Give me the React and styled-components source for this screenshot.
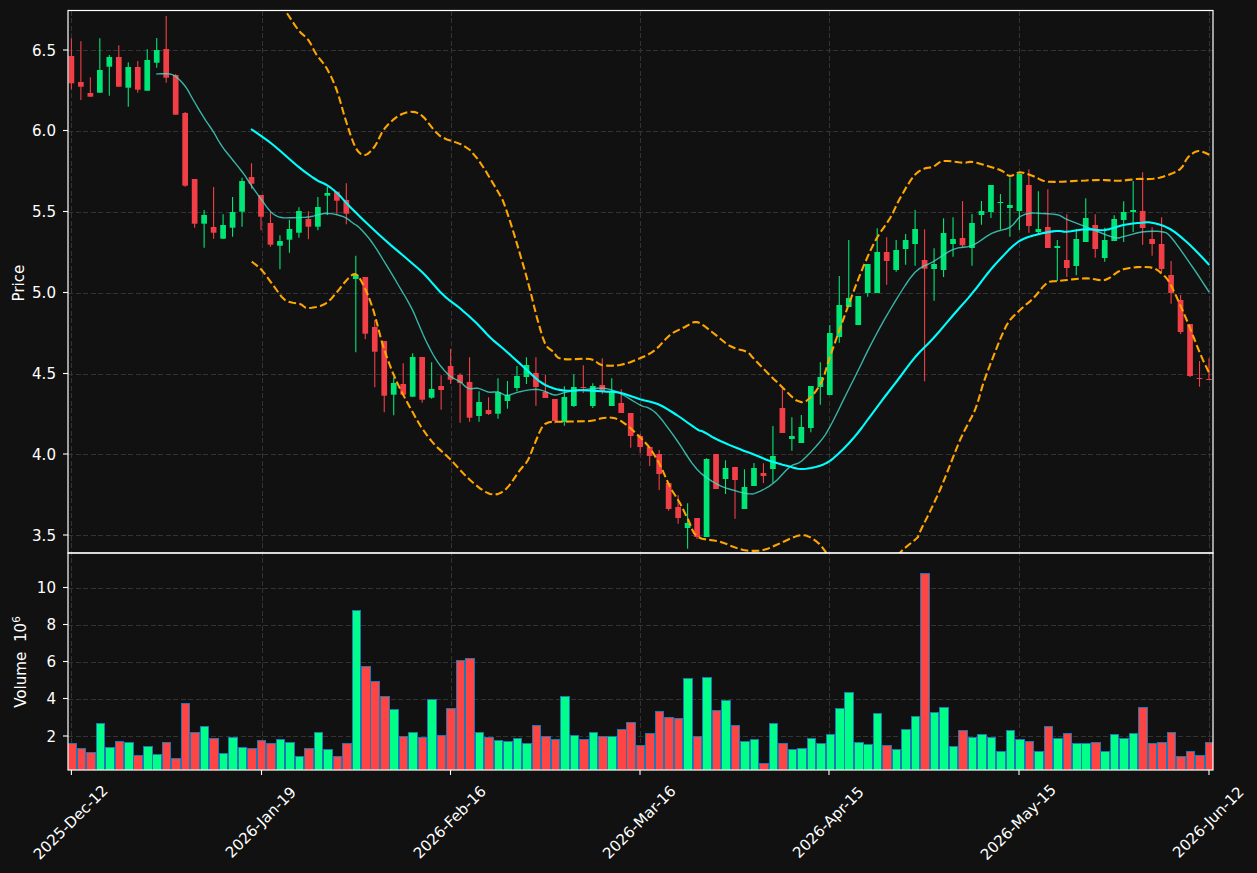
import React from 'react';
import styled, { createGlobalStyle } from 'styled-components';

const Global = createGlobalStyle`
  html, body { margin: 0; padding: 0; background: #111111; }
`;

const Page = styled.main`
  width: 1257px;
  height: 873px;
  background: #111111;
  overflow: hidden;
`;
const Figure = styled.svg`
  display: block;
  width: 1257px;
  height: 873px;
  font-family: 'DejaVu Sans', sans-serif;
`;
const GridLine = styled.line`
  stroke: #333333;
  stroke-width: 1;
  stroke-dasharray: 5 2.5;
  shape-rendering: crispEdges;
`;
const Spine = styled.rect`
  fill: none;
  stroke: #ffffff;
  stroke-width: 1.2;
`;
const Tick = styled.line`
  stroke: #ffffff;
  stroke-width: 1.1;
`;
const TickLabel = styled.text`
  fill: #ffffff;
  font-size: 15.1px;
  text-anchor: ${p => p.$anchor || 'end'};
`;
const AxisTitle = styled.text`
  fill: #ffffff;
  font-size: 15.1px;
  text-anchor: middle;
`;
const Wick = styled.line`
  stroke: ${p => (p.$up ? '#00e676' : '#f23f47')};
  stroke-width: 1.1;
`;
const Body = styled.rect`
  fill: ${p => (p.$up ? '#00e676' : '#f23f47')};
`;
const VolumeBar = styled.rect`
  fill: ${p => (p.$up ? '#00ff88' : '#ff4444')};
  stroke: #1f77b4;
  stroke-width: 1;
  shape-rendering: crispEdges;
`;
const Trace = styled.polyline`
  fill: none;
  stroke-linejoin: round;
  stroke: ${p => p.$color};
  stroke-width: ${p => p.$width};
  stroke-opacity: ${p => p.$opacity || 1};
  stroke-dasharray: ${p => p.$dash || 'none'};
`;

const X0 = 71.4;
const STEP = 9.48;
const xAt = i => X0 + STEP * i;

const candles = [
  [56,83.3,38.3,89.3,0],[82,86.7,41.3,100,0],[93,96.7,77.3,96.7,0],[70,92.7,38.3,92.7,1],[57,66.7,55,95.7,1],
  [57,86.7,45.3,86.7,0],[67,87.7,62.3,106.7,1],[67,89.7,61,92.7,0],[60,90.7,49.3,90.7,1],[50,62.7,38,67.7,1],
  [49,77.7,16,82.7,0],[75,114.7,74,114.7,0],[113,185.7,112,186.7,0],[179,223.7,179,227.7,0],[215,223.7,210,247.7,1],
  [227,232.7,187,238.7,0],[225,238.7,214.3,238.7,1],[212,227.7,197,236.7,1],[181,211.7,177.7,226.7,1],[177,183.7,163.3,188.7,0],
  [195,216.7,195,230.3,0],[223,244.7,212,246.7,0],[241,245.7,235.3,269.3,1],[229,239.7,219.7,252.7,1],[211,232.7,207.3,237.7,1],
  [219,226.7,211.3,239.3,0],[207,226.7,197,230.3,1],[193,195.7,186.7,215,1],[191.7,200.7,191.7,215,0],[200,213.7,183.3,224.3,0],
  [275,279,255.7,352.3,1],[277,333.7,277,339.3,0],[327,351.7,320,387.3,0],[341,395.7,341,412.3,0],[383,394.7,377.3,415.3,1],
  [384,394.7,363.3,394.7,0],[357,396.7,353.3,396.7,1],[357,399.7,357,402.7,0],[389,397.7,362.3,398.7,1],[386,390,375.3,409.7,0],
  [366,379.7,349,384,0],[375,383,373.3,422.7,0],[382,417.7,357.3,421.7,0],[402,416,391.3,421.7,1],[410,414,397.3,415,0],
  [392.3,413.7,378.3,418.7,1],[395,401,381,408.7,1],[376,388,366,391.3,1],[365,377,357.3,384,1],[373,387,357.3,405.7,0],
  [392,398,375,398,0],[399,421,399,423.3,0],[397,422,386.3,425.7,1],[387,406,374.3,407,1],[387,388,365.3,393,0],
  [386,406,383.3,408,1],[385,391,358.3,394,0],[391,406,378.3,406,1],[403,413,389.3,413,0],[413,436,413,447.7,0],
  [436,447,434,453,0],[447,456,447,466,0],[454,474,450,490,0],[483,509,483,510.7,0],[507,518,495.3,523.7,0],
  [523,528,503.3,548.7,1],[518,537,518,539,0],[459,537,458.3,537,1],[454,489,454,489,0],[468,479,460.3,494,1],
  [467,480,467,518.7,0],[487,509,469.3,509,1],[468,486,463,486,1],[473,476,463.3,483,0],[456,469,426,483,1],
  [408,433,387,433,0],[436,439,417.3,450.7,1],[427,443,415,443,1],[386,428,386,432.3,1],[377,387,362.3,404.7,1],
  [333,395,325,395,1],[305,337,276,342.7,1],[298,307,240,307,1],[296,325,296,325,1],[264,293,264,296.7,1],
  [252,293,228.3,293,1],[252,261,237.3,284.7,0],[250,270,240,271.7,1],[240,249,234,264.7,1],[229,244,210,265.7,1],
  [260,268.7,229.3,381.3,0],[264,269,248.3,300.7,1],[233,270,218.3,277,1],[239,244,217.3,256.7,1],[238,245.3,201,247.3,0],
  [223,248,214,265.7,1],[211,215,201,224.7,1],[185,212,185,218,1],[202,203,194,229.7,1],[205,208,177.3,236.7,1],
  [174,211,173.3,230,1],[185,226,169.3,232.7,0],[229,232,191.3,234,1],[227,248,189.3,248,0],[246,248,240,281,1],
  [260,268,214.3,277,0],[239,266,229,275.3,1],[218,242,198.3,242,1],[225,249,214.3,257.7,0],[240,258,227.7,261.7,1],
  [219,241,215.3,241,1],[212,220,201.3,242,1],[210,212,181,232,1],[211,228,172.3,244.7,0],[239,244,227.3,255.7,0],
  [244,269,217.3,272,0],[275,293,261,303.7,0],[300,332,295,334,0],[324,376,324,377,0],[378,379,361,386.7,0],
  [379,380,358.3,380,0],
];

const volumeTops = [
  743.3,748.3,752.3,723.3,747.3,741.3,742.3,755.3,746.3,754.3,742.3,758.3,703.3,732.3,726.3,738.3,753.3,737.3,747.3,748.3,
  740.3,743.3,739.3,742.3,756.3,748.3,732.3,749.3,756.3,743.3,610.3,666.3,681.3,696.3,709.3,736.3,732.3,737.3,699.3,735.3,
  708.3,660.3,658.3,732.3,737.3,740.3,741.3,738.3,743.3,725.3,736.3,739.3,696.3,735.3,739.3,732.3,736.3,736.3,729.3,722.3,
  745.3,733.3,711.3,717.3,718.3,678.3,736.3,677.3,710.3,700.3,725.3,741.3,739.3,763.3,723.3,743.3,749.3,748.3,738.3,743.3,
  734.3,708.3,692.3,742.3,744.3,713.3,745.3,749.3,729.3,716.3,573.3,712.3,707.3,746.3,730.3,737.3,734.3,737.3,751.3,730.3,
  739.3,741.3,751.3,726.3,738.3,733.3,743.3,743.3,742.3,751.3,734.3,738.3,733.3,707.3,743.3,742.3,732.3,756.3,751.3,755.3,
  742.3,
];

// Catmull-Rom resampling keeps the traced averages smooth between the read points.
const smooth = a => {
  const out = [];
  for (let i = 0; i < a.length - 1; i++) {
    const p0 = a[Math.max(i - 1, 0)];
    const p1 = a[i];
    const p2 = a[i + 1];
    const p3 = a[Math.min(i + 2, a.length - 1)];
    for (let k = 0; k < 4; k++) {
      const t = k / 4;
      const at = d =>
        0.5 * (2 * p1[d] + (p2[d] - p0[d]) * t + (2 * p0[d] - 5 * p1[d] + 4 * p2[d] - p3[d]) * t * t +
          (3 * p1[d] - p0[d] - 3 * p2[d] + p3[d]) * t * t * t);
      out.push(`${at(0).toFixed(1)},${at(1).toFixed(1)}`);
    }
  }
  const last = a[a.length - 1];
  out.push(`${last[0]},${last[1]}`);
  return out.join(' ');
};

const thinAverage = [
  [156.3,74],[166.7,73.7],[175,76],[185,86],[193.3,100],[203.3,116.7],[213.3,131.7],[222.3,146.7],[233.3,160.7],[243.3,173.3],
  [251.7,186],[261.7,200],[270.7,211.7],[280,217.3],[293.3,217.7],[310,216.7],[326.7,213.3],[343.3,216.7],[353.3,223.3],[360,228.3],
  [371,241],[383.3,260],[398.3,285],[411.7,308.3],[423.3,335],[433.3,355],[441.7,367.3],[450,376],[460,381.7],[468.3,388.3],
  [478.3,388.3],[488.3,392],[498.3,392],[506.7,395.3],[520,391.7],[535,389.3],[545,391.3],[555,395],[566.7,392],[583.3,389.7],
  [603.3,388.3],[620,393.3],[640,405],[649.3,408.3],[659.3,416.7],[676.7,440],[696.7,469],[716.7,484],[735,490.7],[748.3,493.7],
  [756.7,492.7],[773.3,483.3],[790,466.7],[801.7,461],[820,441.7],[830,426.7],[846.7,393.3],[856.7,373.3],[875,336.7],[895,301.7],
  [915,272.3],[933.3,261.7],[953.3,249.3],[972.7,245.3],[991.7,233.3],[1010,227.3],[1020,216.7],[1030,213.3],[1038.3,213.3],[1057.3,214.7],
  [1066.7,219.3],[1085.7,226.7],[1113.3,237.3],[1123.3,236.7],[1141.7,232],[1161.7,231.7],[1171,237.3],[1190,263.3],[1209.3,292.3],
];

const thickAverage = [
  [251,129],[273.3,145],[298.3,166.7],[316.7,180],[326.7,185],[336.7,192.7],[346.7,203.3],[360,216.7],[385,240],[408.3,260],
  [423.3,273.3],[440,291.7],[448.3,299.3],[460,308.3],[476.7,323.3],[490,337.3],[506.7,351.7],[523.3,366.7],[540,381.7],[553.3,388.3],
  [566.7,390.7],[583.3,390.3],[606.7,391.7],[620,392.7],[640,399.3],[658.3,404.3],[676.7,415],[696.7,429],[703.3,431.7],[716.7,439.3],
  [735,447.3],[753.3,454.3],[770,461],[786.7,465.7],[801.7,469],[820,465.7],[833.3,458.3],[853.3,438.3],[870,416.7],[885,396.5],
  [897,381],[915,357.3],[933.3,338.3],[953.3,315],[972.7,292.7],[988,273],[1000,259.3],[1018.3,241.7],[1038.3,234.3],[1056.7,231],
  [1066.7,231.7],[1085.7,229.3],[1105,230],[1123.3,225],[1141.7,222.7],[1151.7,222.7],[1170,229],[1190,245],[1209.3,265],
];

const upperBand = [
  [281,4],[285,10],[298.3,30],[308.3,40],[316.7,55],[326.7,68.3],[336.7,90],[346.7,123.3],[356,148.3],[365,155],
  [375,146],[385,128],[402,114],[420,114],[440,136],[470,150],[497,190],[507,212],[521.7,260],[530,290],
  [536.7,316.7],[545,343.3],[553.3,351.7],[561.7,359],[590,359],[601.7,365],[620,365],[640,358.3],[655,350],[670,335],
  [685,327],[697,322],[712,332],[730,346],[747,352],[755,360],[780,385],[801.7,402.3],[820,385],[830,356.7],
  [846.7,310],[863.3,266.7],[876.7,238.3],[890,218.3],[900,198.3],[913.3,176.7],[923.3,169],[933.3,166.7],[943.3,161],[963.3,162.7],
  [973.3,162],[991.7,167.3],[1001.7,170.7],[1010,176],[1020,172.3],[1033,176],[1048,181.7],[1080,180.7],[1100,180],[1120,180.7],
  [1136.7,179],[1150,179],[1163,176.7],[1180,169.3],[1188,157.3],[1198.3,151],[1209.3,154.7],
];

const lowerBand = [
  [251.7,261.7],[261.7,270],[273,285],[285,300],[300,304],[308,308],[325,304],[337,292],[345,282],[355,274],
  [363.3,285],[373.3,310],[383.3,346.7],[396.7,381.7],[413.3,413.3],[423.3,430],[435,445],[450,459],[470,480],[490,494],
  [505,490],[520,470],[528,460],[535,443],[545,424],[563.3,421.7],[590,421],[603.3,418],[615,418.3],[626.7,425],
  [640,437.3],[650,448.3],[660,465],[670,486.7],[680,503.3],[688.3,520],[697.3,536.7],[720,541.7],[743.3,550],[763.3,550],
  [780,543.3],[801.7,535],[816.7,541.7],[826.7,553.3],[838,570],[890,570],[900,552.7],[916.7,538.3],[920,531.7],[940,490],
  [960,440],[975,410],[983.3,383.3],[993.3,356.7],[1006.7,325],[1020,310],[1033.3,298.3],[1046.7,283.3],[1058.3,281],[1086.7,278.3],
  [1105,280],[1123.3,269.3],[1150,267.3],[1163.3,275],[1171.7,286.7],[1186.7,320],[1200,353.3],[1209.3,373.3],
];

const dateTicks = [
  [71.4, '2025-Dec-12'],
  [261.5, '2026-Jan-19'],
  [450.5, '2026-Feb-16'],
  [640, '2026-Mar-16'],
  [829, '2026-Apr-15'],
  [1019, '2026-May-15'],
  [1209, '2026-Jun-12'],
];
const priceTicks = [[50, '6.5'], [130.5, '6.0'], [211.5, '5.5'], [292.5, '5.0'], [373.5, '4.5'], [454, '4.0'], [535, '3.5']];
const volumeTicks = [[587.5, '10'], [624.5, '8'], [661.5, '6'], [698.5, '4'], [736, '2']];

const LEFT = 68;
const RIGHT = 1213;
const TOP = 10.5;
const MID = 553;
const BOTTOM = 770;

function YAxis({ ticks }) {
  return ticks.map(([y, label]) => (
    <g key={label}>
      <GridLine x1={LEFT} x2={RIGHT} y1={Math.round(y) + 0.5} y2={Math.round(y) + 0.5} />
      <Tick x1={LEFT - 5} x2={LEFT} y1={y} y2={y} />
      <TickLabel x={56} y={y + 5.5}>{label}</TickLabel>
    </g>
  ));
}

function Candle({ index, data }) {
  const [top, bottom, high, low, up] = data;
  const x = xAt(index);
  return (
    <g>
      <Wick $up={up} x1={x} x2={x} y1={high} y2={low} />
      <Body $up={up} x={x - 2.85} width={5.7} y={top} height={Math.max(bottom - top, 1)} />
    </g>
  );
}

export default function App() {
  return (
    <Page>
      <Global />
      <Figure viewBox="0 0 1257 873" xmlns="http://www.w3.org/2000/svg">
        <defs>
          <clipPath id="price-area"><rect x={LEFT} y={TOP} width={RIGHT - LEFT} height={MID - TOP} /></clipPath>
          <clipPath id="volume-area"><rect x={LEFT} y={MID} width={RIGHT - LEFT} height={BOTTOM - MID} /></clipPath>
        </defs>

        <YAxis ticks={priceTicks} />
        <YAxis ticks={volumeTicks} />
        {dateTicks.map(([x, label]) => (
          <g key={label}>
            <GridLine x1={Math.round(x) + 0.5} x2={Math.round(x) + 0.5} y1={TOP} y2={BOTTOM} />
            <Tick x1={x} x2={x} y1={BOTTOM} y2={BOTTOM + 5} />
            <TickLabel $anchor="middle" x={x - 1} y={827.5} transform={`rotate(-45 ${x - 1} 822)`}>{label}</TickLabel>
          </g>
        ))}

        <g clipPath="url(#price-area)">
          {candles.map((c, i) => <Candle key={i} index={i} data={c} />)}
          <Trace points={smooth(thinAverage)} $color="#40e0d0" $width={1.39} $opacity={0.8} />
          <Trace points={smooth(thickAverage)} $color="#00ffff" $width={2.1} />
          <Trace points={smooth(upperBand)} $color="#ffa500" $width={2.08} $dash="7.7 3.3" />
          <Trace points={smooth(lowerBand)} $color="#ffa500" $width={2.08} $dash="7.7 3.3" />
        </g>

        <g clipPath="url(#volume-area)">
          {volumeTops.map((top, i) => {
            const left = Math.round(xAt(i) - 4.27);
            const right = Math.round(xAt(i) + 4.27);
            const y = Math.round(top) + 0.5;
            return <VolumeBar key={i} $up={candles[i][4]} x={left + 0.5} y={y} width={right - left} height={BOTTOM - y + 2} />;
          })}
        </g>

        <Spine x={LEFT} y={TOP} width={RIGHT - LEFT} height={MID - TOP} />
        <Spine x={LEFT} y={MID} width={RIGHT - LEFT} height={BOTTOM - MID} />

        <AxisTitle x={24} y={283} transform="rotate(-90 24 283)">Price</AxisTitle>
        <AxisTitle x={26} y={662} transform="rotate(-90 26 662)">
          Volume{'\u00a0\u00a0'}10<tspan fontSize="10.5" dy="-6.5">6</tspan>
        </AxisTitle>
      </Figure>
    </Page>
  );
}
